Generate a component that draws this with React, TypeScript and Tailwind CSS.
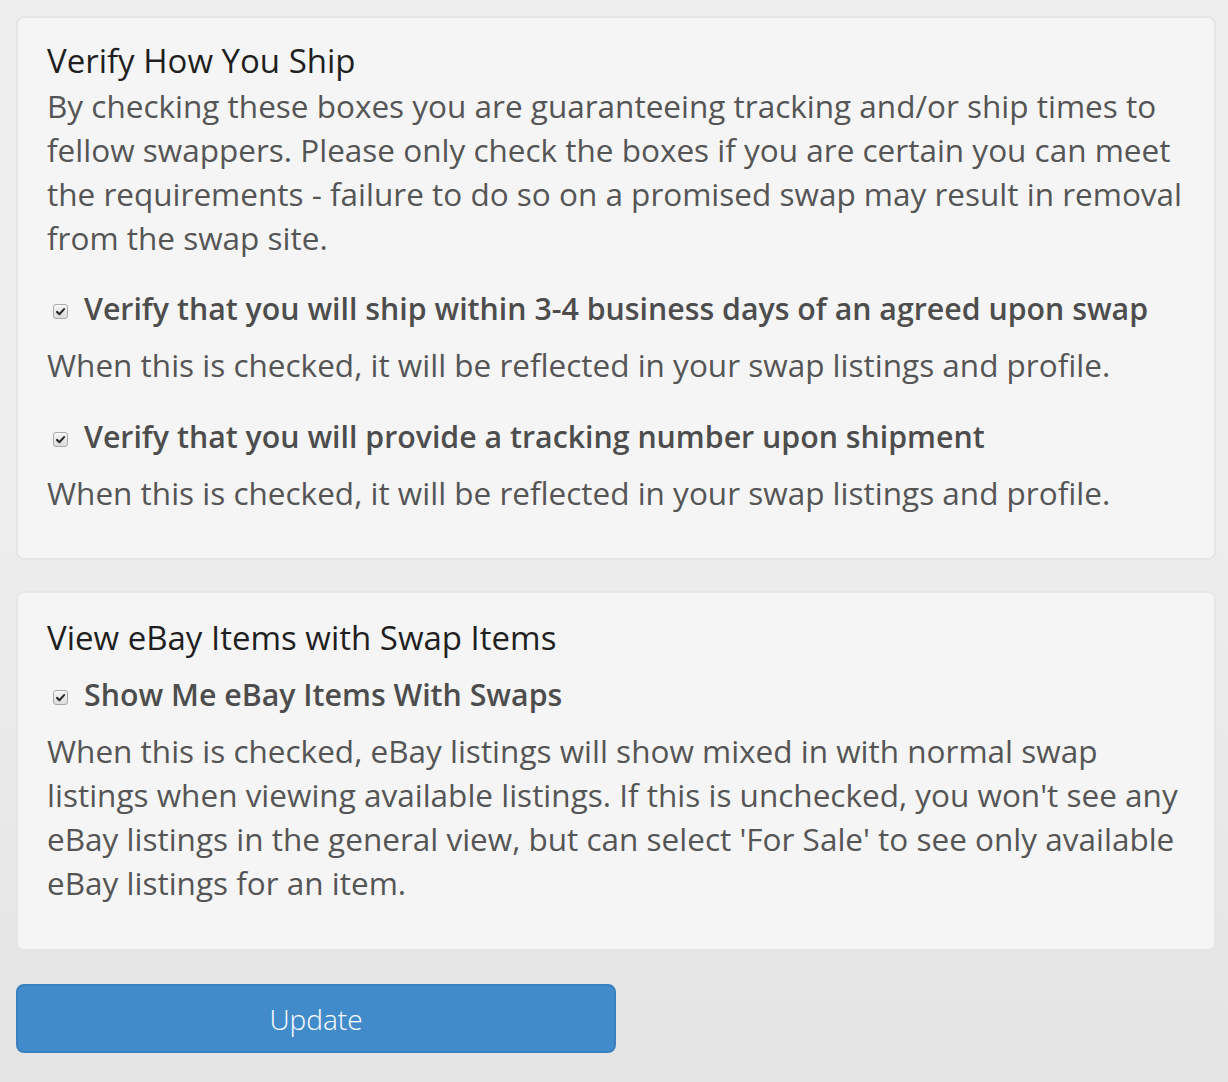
const CheckBox = () => (
  <span className="mt-[4px] flex h-[15px] w-[15px] shrink-0 items-center justify-center rounded-[3px] border border-[#a9a9a9] bg-gradient-to-b from-[#f6f6f6] to-[#dcdcdc] shadow-[inset_0_1px_0_#fff]">
    <svg viewBox="0 0 12 12" className="h-[11px] w-[11px]">
      <path d="M2.2 6.4 4.8 8.9 9.9 3.4" fill="none" stroke="#2b2b2b" strokeWidth="2.3" strokeLinecap="round" strokeLinejoin="round" />
    </svg>
  </span>
)

const Option = ({label, className = ''}: {label: string; className?: string}) => (
  <label className={`flex items-center gap-[16px] pl-[6px] ${className}`}>
    <CheckBox />
    <span className="text-[30.3px] leading-[44px] font-semibold text-[#4d4d4d]">{label}</span>
  </label>
)

const Card = ({children, className = ''}: {children: React.ReactNode; className?: string}) => (
  <div className={`rounded-lg border-2 border-[#e6e6e6] bg-[#f5f5f5] px-[29px] ${className}`}>
    {children}
  </div>
)

export default function App() {
  return (
    <div
      className="min-h-[1082px] bg-gradient-to-b from-[#eeeeee] via-[#ededed] to-[#e4e4e4] pl-4 pr-3 pt-4 pb-8 text-[#555]"
      style={{fontFamily: '"Open Sans", "Noto Sans", sans-serif'}}
    >
      <Card className="pt-[20px] pb-[43px]">
        <h3 className="text-[33px] leading-[46px] text-[#1f1f1f]">Verify How You Ship</h3>
        <p className="text-[31.5px] leading-[44px]">
          By checking these boxes you are guaranteeing tracking and/or ship times to fellow swappers. Please only check the
          boxes if you are certain you can meet the requirements - failure to do so on a promised swap may result in
          removal from the swap site.
        </p>
        <Option className="mt-[27px]" label="Verify that you will ship within 3-4 business days of an agreed upon swap" />
        <p className="mt-[12px] text-[31.5px] leading-[44px]">
          When this is checked, it will be reflected in your swap listings and profile.
        </p>
        <Option className="mt-[28px]" label="Verify that you will provide a tracking number upon shipment" />
        <p className="mt-[12px] text-[31.5px] leading-[44px]">
          When this is checked, it will be reflected in your swap listings and profile.
        </p>
      </Card>

      <Card className="mt-[31px] pt-[22px] pb-[44px]">
        <h3 className="text-[33px] leading-[46px] text-[#1f1f1f]">View eBay Items with Swap Items</h3>
        <Option className="mt-[12px]" label="Show Me eBay Items With Swaps" />
        <p className="mt-[12px] text-[31.5px] leading-[44px]">
          When this is checked, eBay listings will show mixed in with normal swap listings when viewing available listings.
          If this is unchecked, you won't see any eBay listings in the general view, but can select 'For Sale' to see only
          available eBay listings for an item.
        </p>
      </Card>

      <button className="mt-[33px] h-[69px] w-[600px] rounded-lg border-2 border-[#3a7fbf] bg-[#428bcb] text-[28px] font-light text-white">
        Update
      </button>
    </div>
  )
}
